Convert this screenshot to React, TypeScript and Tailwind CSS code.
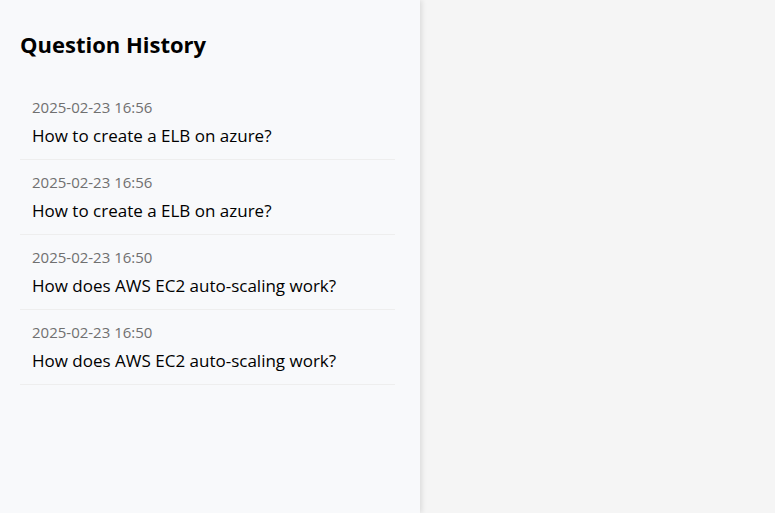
const history = [
  { time: "2025-02-23 16:56", question: "How to create a ELB on azure?" },
  { time: "2025-02-23 16:56", question: "How to create a ELB on azure?" },
  { time: "2025-02-23 16:50", question: "How does AWS EC2 auto-scaling work?" },
  { time: "2025-02-23 16:50", question: "How does AWS EC2 auto-scaling work?" },
];

export default function App() {
  return (
    <div className="flex min-h-screen bg-[#f5f5f5] font-['Open_Sans',sans-serif] text-black">
      <aside className="w-[420px] shrink-0 bg-[#f8f9fb] py-7 pr-[25px] pl-5 shadow-[2px_0_5px_rgba(0,0,0,0.1)]">
        <h2 className="text-[22px] leading-8 font-bold">Question History</h2>
        <ul className="mt-[25px]">
          {history.map((item, index) => (
            <li key={index} className="border-b border-[#eeeeee] px-3 pt-[11px] pb-[11px]">
              <time className="block text-[15px] leading-[22px] text-[#707070]">{item.time}</time>
              <p className="mt-[5px] text-[17px] leading-[25px]">{item.question}</p>
            </li>
          ))}
        </ul>
      </aside>
      <main className="flex-1" />
    </div>
  );
}
